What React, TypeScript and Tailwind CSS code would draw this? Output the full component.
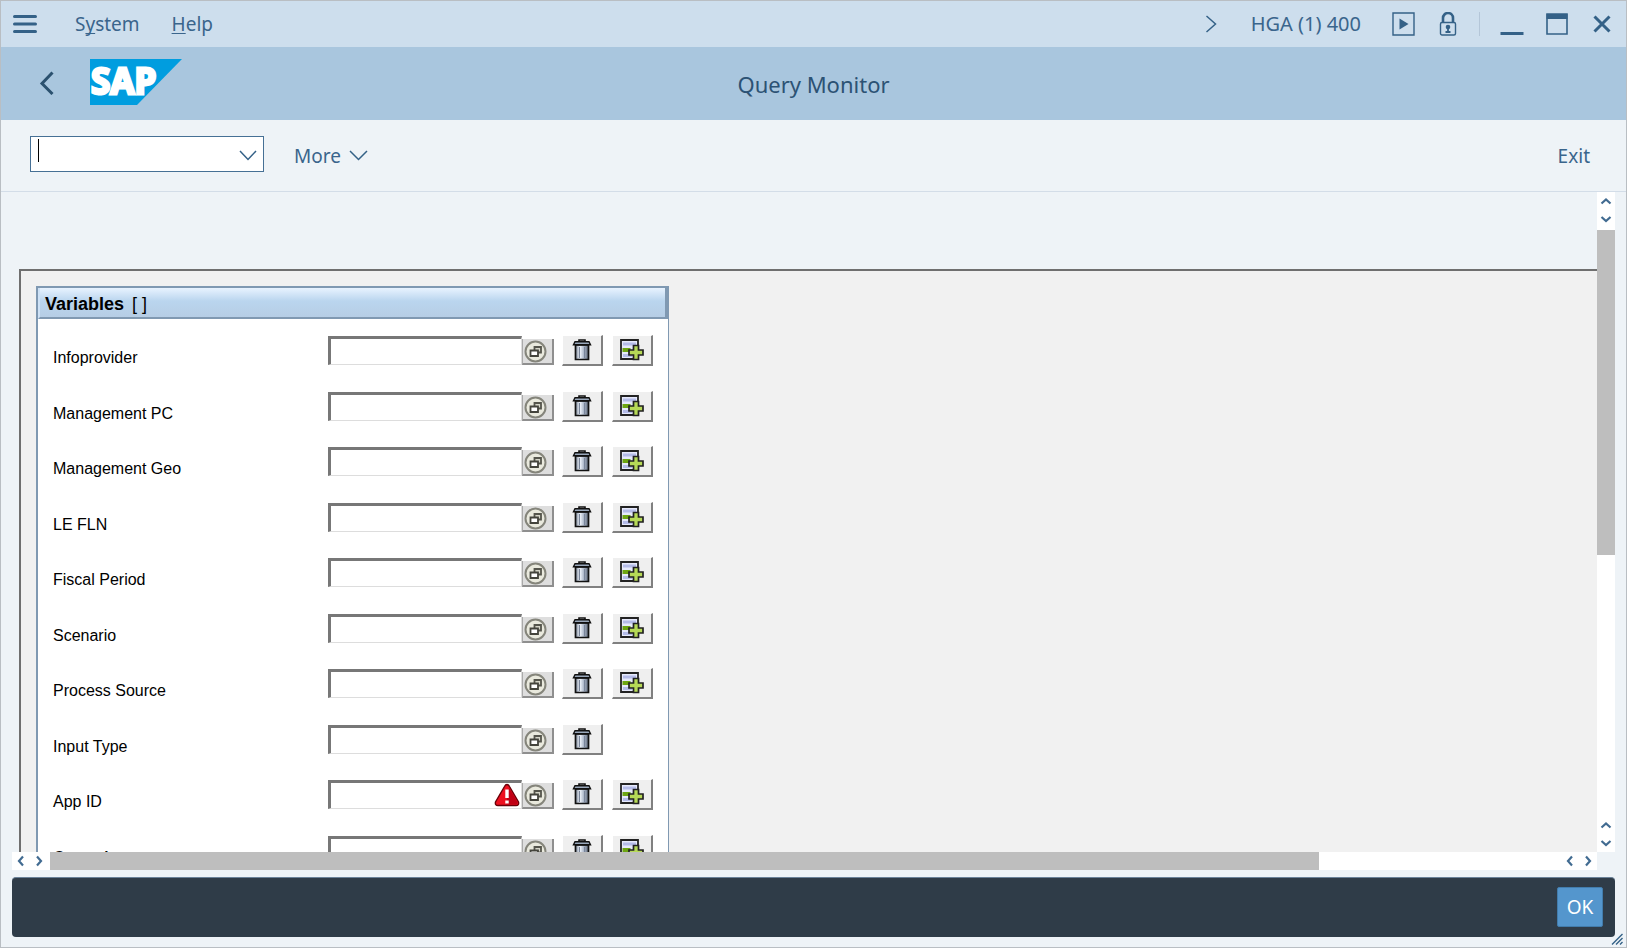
import React from "react";

const variables = [
  { label: "Infoprovider", multiple: true },
  { label: "Management PC", multiple: true },
  { label: "Management Geo", multiple: true },
  { label: "LE FLN", multiple: true },
  { label: "Fiscal Period", multiple: true },
  { label: "Scenario", multiple: true },
  { label: "Process Source", multiple: true },
  { label: "Input Type", multiple: false },
  { label: "App ID", multiple: true, error: true },
  { label: "Group Account", multiple: true },
];

type Direction = "up" | "down" | "left" | "right";

const chevrons: Record<Direction, string> = {
  up: "M1.5 8.5 6 4.5l4.5 4",
  down: "M1.5 4 6 8l4.5-4",
  left: "M8 1.5 4 6l4 4.5",
  right: "M4 1.5 8 6l-4 4.5",
};

function ScrollButton({ direction }: { direction: Direction }) {
  return (
    <button type="button" aria-label={`Scroll ${direction}`} className="flex size-[18px] shrink-0 items-center justify-center">
      <svg width="12" height="12" viewBox="0 0 12 12" fill="none" stroke="#416b91" strokeWidth="2.2">
        <path d={chevrons[direction]} />
      </svg>
    </button>
  );
}

function SapLogo() {
  return (
    <svg width="92" height="46" viewBox="0 0 92 46" role="img" aria-label="SAP">
      <path d="M0 0h92L47 46H0z" fill="#009ddf" />
      <text
        x="1"
        y="35"
        fill="#fff"
        stroke="#fff"
        strokeWidth="2.8"
        fontFamily="Noto Sans, sans-serif"
        fontWeight="700"
        fontSize="35"
      >
        SAP
      </text>
    </svg>
  );
}

function ValueHelpIcon() {
  return (
    <svg width="24" height="24" viewBox="0 0 24 24" fill="none">
      <circle cx="11.500" cy="12.500" r="10" fill="#e9e9dd" stroke="#85857b" strokeWidth="2" />
      <path d="M10.500 8h6.500v5.500h-6.500z" fill="#d5d5c8" stroke="#55554c" strokeWidth="1.800" />
      <path d="M6.500 11.500h7.500v5.500H6.500z" fill="#fff" stroke="#44443c" strokeWidth="1.800" />
    </svg>
  );
}

function TrashIcon() {
  return (
    <svg width="20" height="22" viewBox="0 0 20 22">
      <defs>
        <linearGradient id="can">
          <stop offset="0" stopColor="#7f8a9c" />
          <stop offset=".35" stopColor="#eef3fa" />
          <stop offset=".65" stopColor="#a9b4c6" />
          <stop offset="1" stopColor="#626c7d" />
        </linearGradient>
      </defs>
      <path d="M7 2.500V1h6v1.500" fill="none" stroke="#111" strokeWidth="1.600" />
      <path d="M3.500 6h13v14.500h-13z" fill="url(#can)" stroke="#111" strokeWidth="1.700" />
      <path d="M3 2.700h14l1.500 3h-17z" fill="#9aa8bb" stroke="#111" strokeWidth="1.400" />
      <path d="M7.500 8v11M12.500 8v11" stroke="#7a869b" strokeWidth="1" />
    </svg>
  );
}

function MultipleIcon() {
  return (
    <svg width="24" height="22" viewBox="0 0 24 22">
      <path d="M1 1h17v19H1z" fill="#e6e9fb" stroke="#222" strokeWidth="1.800" />
      <path d="M3 5h13M3 16.500h9" stroke="#b4bbe8" strokeWidth="3" />
      <path d="M2.500 11h8" stroke="#6da512" strokeWidth="4" />
      <path d="M13.500 6.500h5v4.500H23v5h-4.500v4.500h-5V16H9v-5h4.500z" fill="#b6d957" stroke="#222" strokeWidth="1.700" />
    </svg>
  );
}

function ErrorIcon() {
  return (
    <svg width="26" height="24" viewBox="0 0 26 24" role="img" aria-label="Error">
      <path
        d="M13 1.500q1.500 0 2.500 2L24.500 19q.8 3.500-2.500 3.500H4Q.7 22.500 1.500 19L10.500 3.500q1-2 2.500-2z"
        fill="#ee1020"
        stroke="#6a0008"
        strokeWidth="1.400"
      />
      <path d="M15 4.500 23.500 19q.5 2.500-2 2.500H12z" fill="#c00014" />
      <path d="M13 6.500v8.500M13 17.500v3" stroke="#fff" strokeWidth="3.400" />
    </svg>
  );
}

function VariableRow({ label, multiple, error }: { label: string; multiple: boolean; error?: boolean }) {
  const id = label.replace(/ /g, "-").toLowerCase();
  const raised =
    "flex h-[31px] w-[41px] justify-center border-t border-r-2 border-b-2 border-l border-t-white border-r-[#808080] border-b-[#808080] border-l-white bg-[#efefef] pt-[3px]";
  return (
    <div className="flex items-start pt-4 pl-[15px]">
      <label htmlFor={id} className="w-[275px] pt-[13px] text-base leading-5 text-black">
        {label}
      </label>
      <div className="relative">
        <input
          id={id}
          type="text"
          className="mt-px block h-[29px] w-[194px] border-t-[3px] border-r border-b border-l-[3px] border-t-[#777] border-r-[#ddd] border-b-[#ddd] border-l-[#777] bg-white px-1 outline-none"
        />
        {error && (
          <span className="absolute top-1 right-0.5">
            <ErrorIcon />
          </span>
        )}
      </div>
      <button
        type="button"
        aria-label={`Value help for ${label}`}
        className="mt-1 flex h-[26px] w-8 items-center border-r-2 border-b-2 border-l border-r-[#8f8f8f] border-b-[#8f8f8f] border-l-[#aaa] bg-[#dedede] pl-px"
      >
        <ValueHelpIcon />
      </button>
      <div className="ml-2 flex gap-[9px]">
        <button type="button" aria-label={`Delete ${label}`} className={raised}>
          <TrashIcon />
        </button>
        {multiple && (
          <button type="button" aria-label={`Multiple selection for ${label}`} className={raised}>
            <MultipleIcon />
          </button>
        )}
      </div>
    </div>
  );
}

function MenuBar() {
  return (
    <header className="flex h-[46px] shrink-0 items-center bg-[#cddeed] pr-[15px] pl-3 text-[19px] leading-6 text-[#3a658c]">
      <button type="button" aria-label="Menu">
        <svg width="24" height="18" viewBox="0 0 24 18" stroke="#346187" strokeWidth="3" strokeLinecap="round">
          <path d="M1.500 1.500h21M1.500 9h21M1.500 16.500h21" />
        </svg>
      </button>
      <nav className="ml-[38px] flex gap-8">
        <button type="button">
          S<span className="underline underline-offset-2 [text-decoration-skip-ink:none]">y</span>stem
        </button>
        <button type="button">
          <span className="underline underline-offset-2">H</span>elp
        </button>
      </nav>
      <div className="ml-auto flex items-center">
        <button type="button" aria-label="Expand">
          <svg width="12" height="18" viewBox="0 0 12 18" fill="none" stroke="#346187" strokeWidth="1.500">
            <path d="m1.500 1 9 8-9 8" />
          </svg>
        </button>
        <span className="ml-[34px] text-xl leading-6">HGA (1) 400</span>
        <button type="button" aria-label="Run" className="ml-[31px]">
          <svg width="23" height="24" viewBox="0 0 23 24" fill="none" stroke="#346187" strokeWidth="1.400">
            <path d="M1 1h21v22H1z" />
            <path d="m7.500 6.500 9 5.500-9 5.500z" fill="#346187" stroke="none" />
          </svg>
        </button>
        <button type="button" aria-label="Lock" className="ml-6">
          <svg width="18" height="24" viewBox="0 0 18 24" fill="none" stroke="#346187">
            <path d="M4 11V6a5 5 0 0 1 10 0v5" strokeWidth="2.600" />
            <rect x="1.500" y="10.500" width="15" height="12.500" rx="1.500" strokeWidth="1.400" />
            <circle cx="9" cy="15" r="2.300" fill="#346187" stroke="none" />
            <path d="M9 15v4.500M6.500 20h5" strokeWidth="1.800" />
          </svg>
        </button>
        <span className="ml-[22px] h-6 w-px bg-[#b4c6d8]" />
        <button type="button" aria-label="Minimize" className="ml-5">
          <svg width="24" height="24" viewBox="0 0 24 24" stroke="#346187" strokeWidth="3">
            <path d="M.5 21.500h23" />
          </svg>
        </button>
        <button type="button" aria-label="Maximize" className="ml-[22px]">
          <svg width="22" height="22" viewBox="0 0 22 22" fill="none" stroke="#346187">
            <path d="M1 1h20v20H1z" strokeWidth="1.600" />
            <path d="M.5 3.500h21" strokeWidth="5" />
          </svg>
        </button>
        <button type="button" aria-label="Close" className="ml-[25px]">
          <svg width="18" height="18" viewBox="0 0 18 18" stroke="#346187" strokeWidth="3">
            <path d="m1.500 1.500 15 15m0-15-15 15" />
          </svg>
        </button>
      </div>
    </header>
  );
}

function TitleBar() {
  return (
    <div className="grid h-[73px] shrink-0 grid-cols-[1fr_auto_1fr] items-center bg-[#a9c6de]">
      <div className="flex items-center pb-[3px] pl-[38px]">
        <button type="button" aria-label="Back">
          <svg width="16" height="26" viewBox="0 0 16 26" fill="none" stroke="#2b516f" strokeWidth="3">
            <path d="M13.500 3.500 3 14.500l10.500 10.500" />
          </svg>
        </button>
        <div className="ml-[35px]">
          <SapLogo />
        </div>
      </div>
      <h1 className="text-[22px] leading-7 text-[#2c5274]">Query Monitor</h1>
    </div>
  );
}

function Toolbar() {
  return (
    <div className="flex h-[72px] shrink-0 items-center border-b border-[#d3dde8] pr-9 pl-[29px] text-[19px] leading-6 text-[#3a658c]">
      <div className="relative mb-1 flex h-9 w-[234px] items-center border border-[#467095] bg-white">
        <input type="text" aria-label="Transaction code" className="h-full min-w-0 flex-1 bg-transparent px-2 outline-none" />
        <span className="absolute top-[2px] left-[7px] h-[23px] w-px bg-black" />
        <button type="button" aria-label="Open history" className="mr-1.5 pt-1">
          <svg width="18" height="11" viewBox="0 0 18 11" fill="none" stroke="#346187" strokeWidth="1.500">
            <path d="m1 1 8 8.500L17 1" />
          </svg>
        </button>
      </div>
      <button type="button" className="ml-[30px] flex items-center gap-2">
        More
        <svg width="19" height="11" viewBox="0 0 19 11" fill="none" stroke="#346187" strokeWidth="1.500">
          <path d="m1 1 8.500 8.500L18 1" />
        </svg>
      </button>
      <button type="button" className="ml-auto">
        Exit
      </button>
    </div>
  );
}

export default function App() {
  return (
    <div className="flex h-screen flex-col border border-[#b9bec3] bg-[#eef3f7] font-['Noto_Sans',sans-serif]">
      <MenuBar />
      <TitleBar />
      <Toolbar />

      <div className="flex min-h-0 flex-1 flex-col px-[11px]">
        <div className="flex min-h-0 flex-1">
          <main className="min-w-0 flex-1 overflow-hidden pt-[77px] pl-[7px] font-['Liberation_Sans',Arial,sans-serif]">
            <div className="border-t-2 border-l-2 border-[#6f6f6f] bg-[#f1f1f1] pt-[15px] pl-[15px]">
              <section className="w-[633px] border-t-2 border-r border-l-2 border-[#8099b2] bg-white">
                <h2 className="flex h-[31px] items-center gap-2 border-r-[3px] border-b-2 border-l-2 border-r-[#8099b2] border-b-[#8099b2] border-l-[#cfe2f6] bg-linear-to-b from-[#e8f3ff] via-[#bad5ee] via-45% to-[#b6cde5] pt-0.5 pl-[5px] text-lg leading-5 font-bold text-black">
                  Variables <span className="font-normal">[ ]</span>
                </h2>
                <div className="grid h-[555px] auto-rows-fr">
                  {variables.map((variable) => (
                    <VariableRow key={variable.label} {...variable} />
                  ))}
                </div>
              </section>
            </div>
          </main>
          <div className="flex w-[18px] shrink-0 flex-col bg-white">
            <ScrollButton direction="up" />
            <ScrollButton direction="down" />
            <div className="flex-1 pt-0.5">
              <div className="h-[55.5%] bg-[#bebebe]" />
            </div>
            <ScrollButton direction="up" />
            <ScrollButton direction="down" />
          </div>
        </div>
        <div className="mr-[18px] flex h-[18px] shrink-0 bg-white">
          <ScrollButton direction="left" />
          <ScrollButton direction="right" />
          <div className="flex-1 pl-0.5">
            <div className="h-full w-[84%] bg-[#bebebe]" />
          </div>
          <ScrollButton direction="left" />
          <ScrollButton direction="right" />
        </div>
      </div>

      <footer className="relative shrink-0 px-[11px] pt-[7px] pb-[10px]">
        <div className="flex h-[60px] items-center justify-end rounded border-t border-[#6b8299] bg-[#2f3c48] pr-3 pb-0.5">
          <button type="button" className="h-10 w-[46px] rounded-xs border border-[#427cac] bg-[#5496cd] text-[19px] leading-6 text-white">
            OK
          </button>
        </div>
        <svg width="12" height="12" viewBox="0 0 12 12" className="absolute right-[3px] bottom-[2px]" stroke="#346187" strokeWidth="1.400">
          <path d="M1 11.500 11.500 1M5 11.500 11.500 5M9 11.500l2.500-2.500" />
        </svg>
      </footer>
    </div>
  );
}
